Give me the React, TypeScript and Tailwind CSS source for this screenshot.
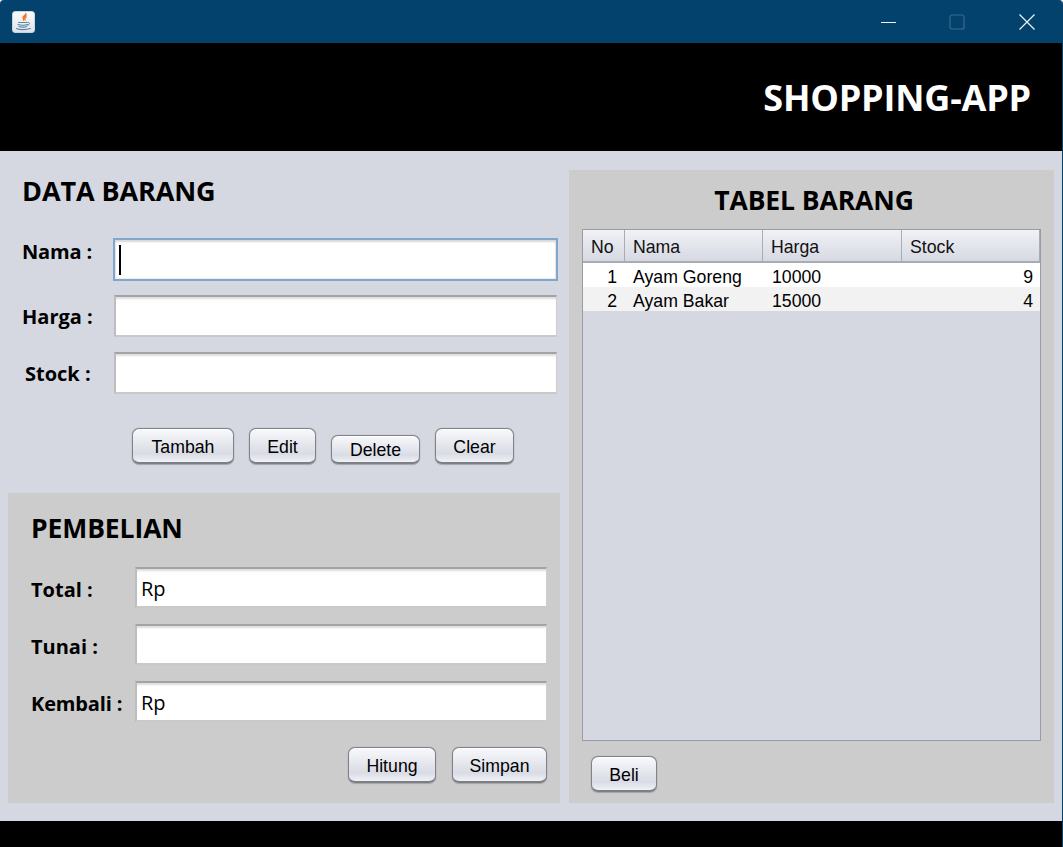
import React from "react";

const heading = "font-['Open_Sans',sans-serif] font-bold text-black";
const ui = "font-['Liberation_Sans',sans-serif]";

function JavaIcon() {
  return (
    <div className="w-[23px] h-[22px] rounded-[3px] bg-gradient-to-b from-[#fbfbfb] to-[#dfe3e8] border border-[#c9d3db] flex items-center justify-center">
      <svg width="19" height="19" viewBox="0 0 19 19" fill="none">
        <path d="M11.500 0c.8 2.500-4 3.800-3 6.800.3 1 .9 2 1.500 2.700-.3-1.800 3.500-3 2.200-5.500 1.200-.3.300-2.500-.7-4z" fill="#e8782a" />
        <path d="M13 4.500c-1.800 1-2.300 2.300-1.200 4.500" stroke="#f0a868" strokeWidth="1" />
        <path d="M4.500 10.500h8.500M4 12.500c2 1 7.500 1 9.500 0M5 14.500c2 .8 6 .8 7.500 0M2.500 16.500c3 1.500 10 1.500 14 0" stroke="#5b87a8" strokeWidth="1.100" strokeLinecap="round" />
        <path d="M13.500 10.500c2.800-.5 2.800 2.300-.5 2.800" stroke="#5b87a8" strokeWidth="1" />
      </svg>
    </div>
  );
}

function Field({ width, height = "h-[41px]", text, focused }: { width: string; height?: string; text?: string; focused?: boolean }) {
  return (
    <div
      className={
        width + " " + height +
        " flex items-center bg-white font-['Open_Sans',sans-serif] text-[20px] text-black shrink-0 " +
        (focused
          ? "pl-[5px] pt-[2px] border-2 border-[#7fa6cc] shadow-[inset_0_2px_2px_#d8d8d8,inset_0_0_0_1px_#eeeeee]"
          : "pl-[4px] pt-[3px] border-l-2 border-l-[#bdbdbd] border-r border-r-[#cfcfcf] border-b-2 border-b-[#c9c9c9] border-t-2 border-t-[#a3a3a3] shadow-[inset_0_3px_2px_-1px_#dedede]")
      }
    >
      {focused ? <div className="w-[2px] h-[30px] bg-black ml-[-1px] mb-[2px]" /> : text}
    </div>
  );
}

function Btn({ label, width, height = "h-[36px]", pad = "pt-[4px]" }: { label: string; width: string; height?: string; pad?: string }) {
  return (
    <button
      className={
        width + " " + height + " " + pad + " " + ui +
        " rounded-[7px] border border-[#7f8288] border-b-2 border-b-[#7c7f85] shadow-[0_0_1px_#8a8a8a,0_1px_1px_#a8a8a8,inset_0_1px_0_#ffffff] bg-gradient-to-b from-[#f8f9fb] via-[#d9dce5] via-75% to-[#f0f2f6] text-[17.7px] text-black flex items-center justify-center"
      }
    >
      {label}
    </button>
  );
}

function HeaderCell({ label, width }: { label: string; width: string }) {
  return (
    <div className={width + " h-[33px] flex items-center pl-[8px] pt-[3px] border-r border-r-[#a9acb2] bg-gradient-to-b from-[#f1f2f6] to-[#d6d9e2] border-b-2 border-b-[#a9acb2] text-[17.7px] text-[#111] shrink-0"}>
      {label}
    </div>
  );
}

function Row({ no, nama, harga, stock, alt }: { no: string; nama: string; harga: string; stock: string; alt?: boolean }) {
  return (
    <div className={"flex h-[24px] items-center pt-[5px] text-[17.7px] text-black " + (alt ? "bg-[#f2f2f2]" : "bg-white")}>
      <div className="w-[42px] text-right pr-[8px] shrink-0">{no}</div>
      <div className="w-[138px] pl-[8px] shrink-0">{nama}</div>
      <div className="w-[139px] pl-[9px] shrink-0">{harga}</div>
      <div className="flex-1 text-right pr-[7px]">{stock}</div>
    </div>
  );
}

export default function App() {
  return (
    <div className="w-[1063px] h-[847px] flex flex-col bg-[#d5d8e1] overflow-hidden rounded-t-[4px] border-r border-r-[#04426e]">
      {/* title bar */}
      <div className="h-[43px] bg-[#04426e] flex items-center pl-[12px] shrink-0">
        <JavaIcon />
        <div className="ml-auto flex items-center">
          <svg width="16" height="16" viewBox="0 0 16 16" className="mr-[52px]"><path d="M0 8.500h15" stroke="#f0f4f7" strokeWidth="1" /></svg>
          <svg width="16" height="16" viewBox="0 0 16 16" className="mr-[54px]"><rect x="1" y="1" width="14" height="14" rx="2" fill="none" stroke="#3a6a8e" strokeWidth="1.200" /></svg>
          <svg width="16" height="16" viewBox="0 0 16 16" className="mr-[27px]"><path d="M.5.500l15 15M15.500.500l-15 15" stroke="#f0f4f7" strokeWidth="1.200" /></svg>
        </div>
      </div>

      {/* banner */}
      <div className="h-[108px] bg-black flex items-center justify-end pr-[31px] pt-[2px] shrink-0">
        <span className="font-['Open_Sans',sans-serif] font-bold text-[36px] tracking-[-0.2px] text-white">SHOPPING-APP</span>
      </div>

      {/* main */}
      <div className="flex-1 flex gap-[9px] pl-[8px] pr-[8px] pb-[18px]">
        {/* left */}
        <div className="w-[552px] flex flex-col shrink-0">
          <div className="h-[342px] flex flex-col">
            <h1 className={heading + " text-[27px] leading-[34px] mt-[23px] ml-[14px] tracking-[-0.1px]"}>DATA BARANG</h1>
            <div className="flex items-start mt-[30px]">
              <span className={heading + " text-[20px] leading-[28px] w-[105px] pl-[14px] tracking-[-0.15px]"}>Nama :</span>
              <Field width="w-[445px]" height="h-[43px]" focused />
            </div>
            <div className="flex items-center mt-[14px]">
              <span className={heading + " text-[20px] w-[106px] pl-[14px] pt-[1px]"}>Harga :</span>
              <Field width="w-[443px]" height="h-[42px]" />
            </div>
            <div className="flex items-center mt-[15px]">
              <span className={heading + " text-[20px] w-[106px] pl-[17px] pt-[1px]"}>Stock :</span>
              <Field width="w-[443px]" height="h-[42px]" />
            </div>
            <div className="flex items-end gap-[15px] ml-[124px] mt-[34px]">
              <Btn label="Tambah" width="w-[102px]" />
              <Btn label="Edit" width="w-[67px]" />
              <Btn label="Delete" width="w-[89px]" height="h-[29px]" pad="pt-[2px]" />
              <Btn label="Clear" width="w-[79px]" />
            </div>
          </div>

          <div className="flex-1 bg-[#cccccc] flex flex-col pl-[23px]">
            <h2 className={heading + " text-[26.500px] leading-[34px] mt-[18px] tracking-[-0.1px]"}>PEMBELIAN</h2>
            <div className="flex items-center mt-[22px]">
              <span className={heading + " text-[20px] w-[104px] pt-[4px]"}>Total :</span>
              <Field width="w-[412px]" text="Rp" />
            </div>
            <div className="flex items-center mt-[16px]">
              <span className={heading + " text-[20px] w-[104px] pt-[4px]"}>Tunai :</span>
              <Field width="w-[412px]" />
            </div>
            <div className="flex items-center mt-[16px]">
              <span className={heading + " text-[20px] w-[104px] pt-[4px] tracking-[-0.15px]"}>Kembali :</span>
              <Field width="w-[412px]" text="Rp" />
            </div>
            <div className="flex justify-end gap-[16px] mt-[25px] pr-[13px]">
              <Btn label="Hitung" width="w-[88px]" />
              <Btn label="Simpan" width="w-[95px]" />
            </div>
          </div>
        </div>

        {/* right */}
        <div className="flex-1 mt-[19px] bg-[#cccccc] flex flex-col px-[13px]">
          <h2 className={heading + " text-[26.500px] leading-[34px] mt-[13px] pl-[5px] text-center tracking-[-0.1px]"}>TABEL BARANG</h2>
          <div className={"mt-[12px] h-[512px] border border-[#999ca3] bg-[#d5d8e1] " + ui}>
            <div className="flex">
              <HeaderCell label="No" width="w-[42px]" />
              <HeaderCell label="Nama" width="w-[138px]" />
              <HeaderCell label="Harga" width="w-[139px]" />
              <HeaderCell label="Stock" width="flex-1" />
            </div>
            <Row no="1" nama="Ayam Goreng" harga="10000" stock="9" />
            <Row no="2" nama="Ayam Bakar" harga="15000" stock="4" alt />
          </div>
          <div className="mt-[15px] ml-[9px]">
            <Btn label="Beli" width="w-[66px]" />
          </div>
        </div>
      </div>

      {/* footer */}
      <div className="h-[26px] bg-black shrink-0" />
    </div>
  );
}
